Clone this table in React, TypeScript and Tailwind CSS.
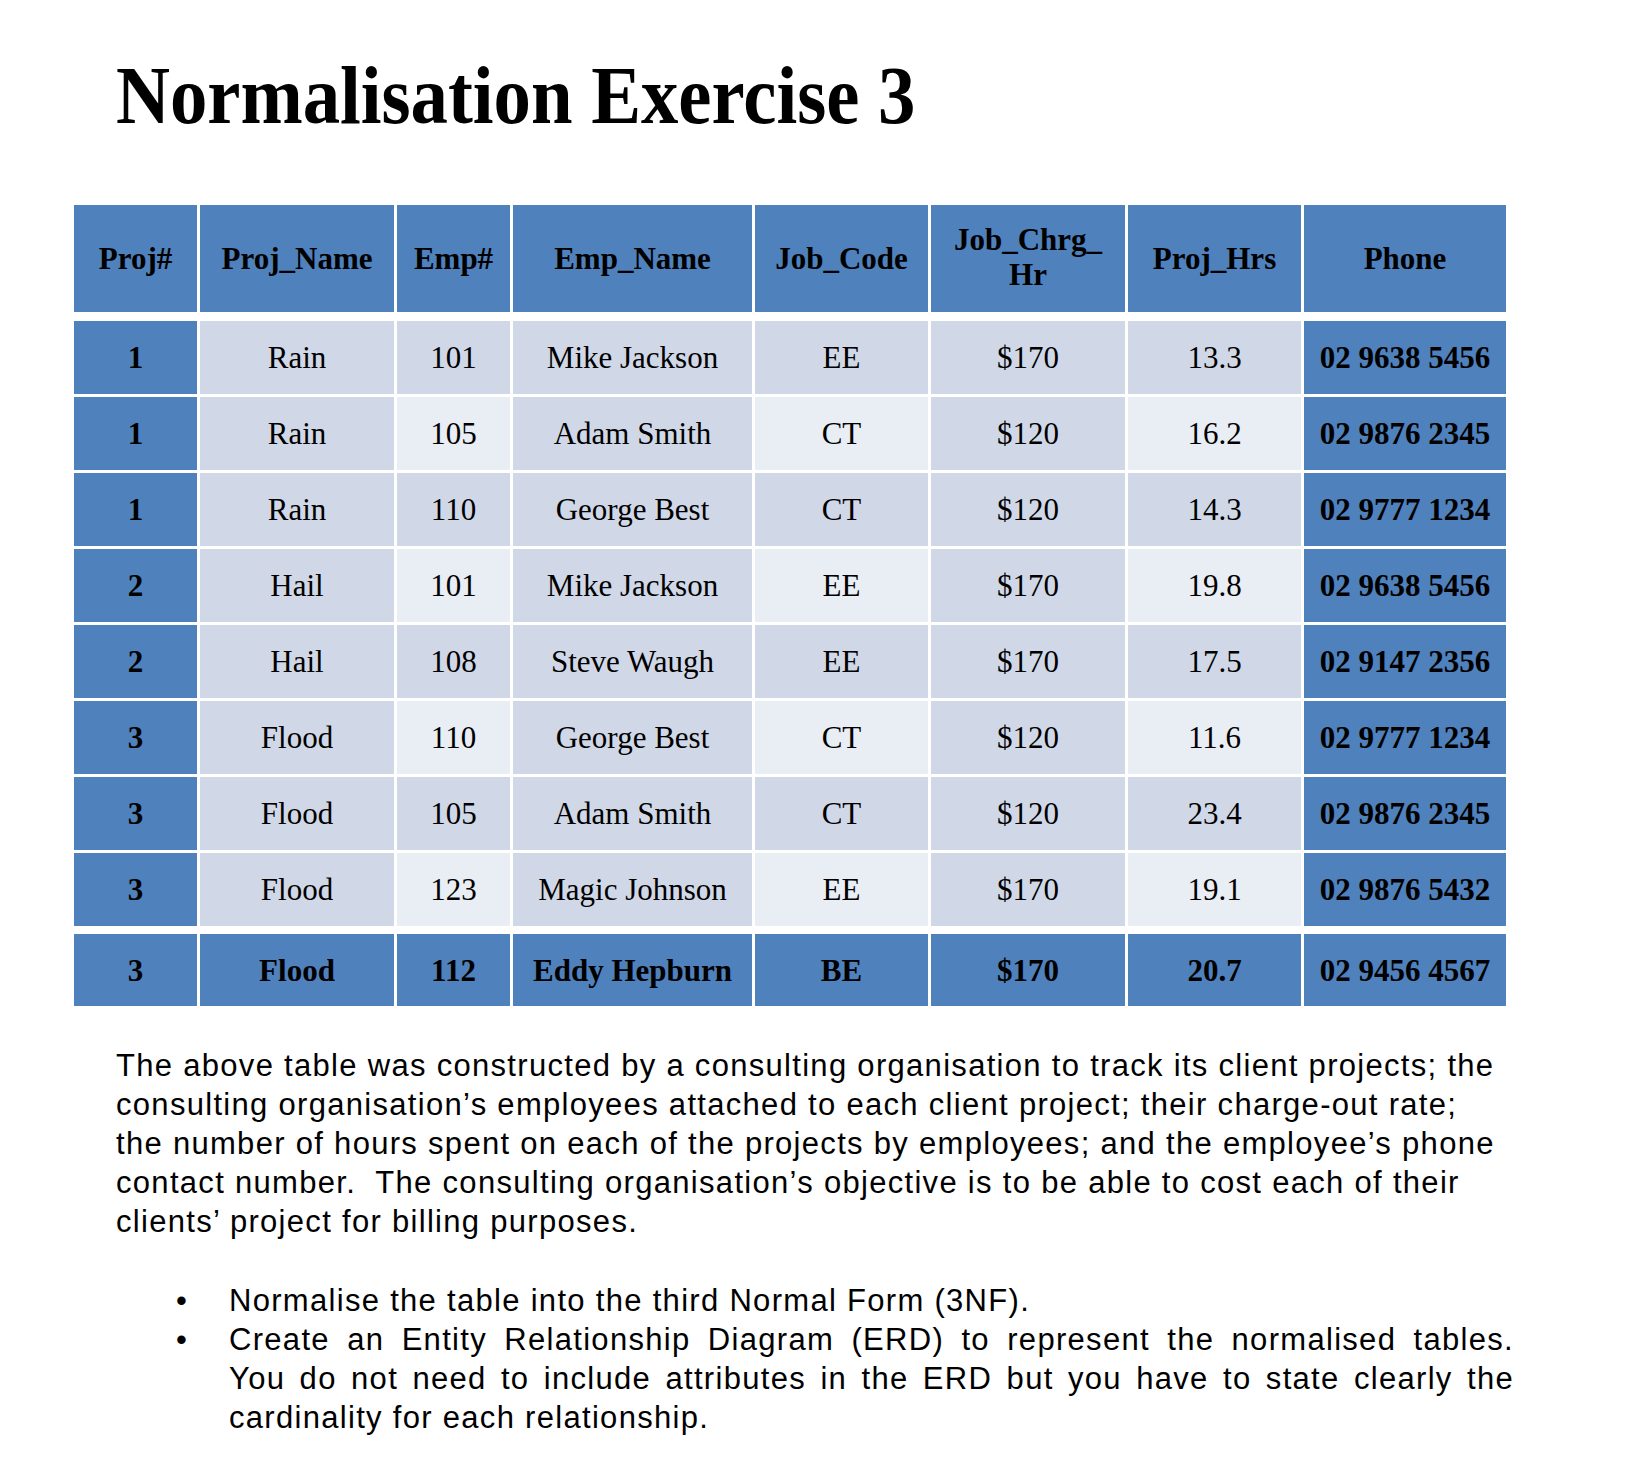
const cols = ['Proj#', 'Proj_Name', 'Emp#', 'Emp_Name', 'Job_Code', 'Job_Chrg_ Hr', 'Proj_Hrs', 'Phone'];

const rows = [
  ['1', 'Rain', '101', 'Mike Jackson', 'EE', '$170', '13.3', '02 9638 5456'],
  ['1', 'Rain', '105', 'Adam Smith', 'CT', '$120', '16.2', '02 9876 2345'],
  ['1', 'Rain', '110', 'George Best', 'CT', '$120', '14.3', '02 9777 1234'],
  ['2', 'Hail', '101', 'Mike Jackson', 'EE', '$170', '19.8', '02 9638 5456'],
  ['2', 'Hail', '108', 'Steve Waugh', 'EE', '$170', '17.5', '02 9147 2356'],
  ['3', 'Flood', '110', 'George Best', 'CT', '$120', '11.6', '02 9777 1234'],
  ['3', 'Flood', '105', 'Adam Smith', 'CT', '$120', '23.4', '02 9876 2345'],
  ['3', 'Flood', '123', 'Magic Johnson', 'EE', '$170', '19.1', '02 9876 5432'],
];

const lastRow = ['3', 'Flood', '112', 'Eddy Hepburn', 'BE', '$170', '20.7', '02 9456 4567'];

const gridCols = 'grid grid-cols-[123px_194px_113px_239px_173px_194px_173px_202px] gap-x-[3px]';

function cellBg(r: number, c: number) {
  if (c === 0 || c === 7) return 'bg-[#4f81bd] font-bold';
  if (r % 2 === 0) return 'bg-[#d0d8e8]';
  return c % 2 === 1 ? 'bg-[#d0d8e8]' : 'bg-[#e9edf4]';
}

export default function App() {
  return (
    <div className="w-[1652px] min-h-[1458px] bg-white text-black">
      <h1 className="ml-[116px] pt-[54px] origin-left scale-x-[0.9] font-['Liberation_Serif',serif] text-[83px] font-bold leading-none">
        Normalisation Exercise 3
      </h1>

      <div className="mt-[68px] ml-[74px] w-[1433px] font-['Liberation_Serif',serif] text-[31px] leading-[31px]">
        <div className={`${gridCols} h-[107px]`}>
          {cols.map((c) => (
            <div key={c} className="flex items-center justify-center bg-[#4f81bd] px-2 text-center font-bold">
              {c === 'Job_Chrg_ Hr' ? (
                <span className="leading-[35px] -mt-[4px]">
                  Job_Chrg_
                  <br />
                  Hr
                </span>
              ) : (
                c
              )}
            </div>
          ))}
        </div>

        <div className="mt-[9px] flex flex-col gap-y-[3px]">
          {rows.map((row, r) => (
            <div key={r} className={`${gridCols} h-[73px]`}>
              {row.map((v, c) => (
                <div key={c} className={`flex items-center justify-center ${cellBg(r, c)}`}>
                  {v}
                </div>
              ))}
            </div>
          ))}
        </div>

        <div className={`${gridCols} mt-[8px] h-[72px]`}>
          {lastRow.map((v, c) => (
            <div key={c} className="flex items-center justify-center bg-[#4f81bd] font-bold">
              {v}
            </div>
          ))}
        </div>
      </div>

      <div className="mt-[40px] pl-[116px] font-['Liberation_Sans',Arial,sans-serif] text-[31px] leading-[39px] tracking-[1.3px]">
        <p>
          The above table was constructed by a consulting organisation to track its client projects; the
          <br />
          consulting organisation’s employees attached to each client project; their charge-out rate;
          <br />
          the number of hours spent on each of the projects by employees; and the employee’s phone
          <br />
          contact number.&nbsp; The consulting organisation’s objective is to be able to cost each of their
          <br />
          clients’ project for billing purposes.
        </p>

        <ul className="mt-[40px] w-[1420px]">
          <li className="flex">
            <span className="w-[113px] shrink-0 pl-[60px]">•</span>
            <span>Normalise the table into the third Normal Form (3NF).</span>
          </li>
          <li className="flex">
            <span className="w-[113px] shrink-0 pl-[60px]">•</span>
            <div className="w-[1285px]">
              <div className="text-justify [text-align-last:justify]">
                Create an Entity Relationship Diagram (ERD) to represent the normalised tables.
              </div>
              <div className="text-justify [text-align-last:justify]">
                You do not need to include attributes in the ERD but you have to state clearly the
              </div>
              <div>cardinality for each relationship.</div>
            </div>
          </li>
        </ul>
      </div>
    </div>
  );
}
